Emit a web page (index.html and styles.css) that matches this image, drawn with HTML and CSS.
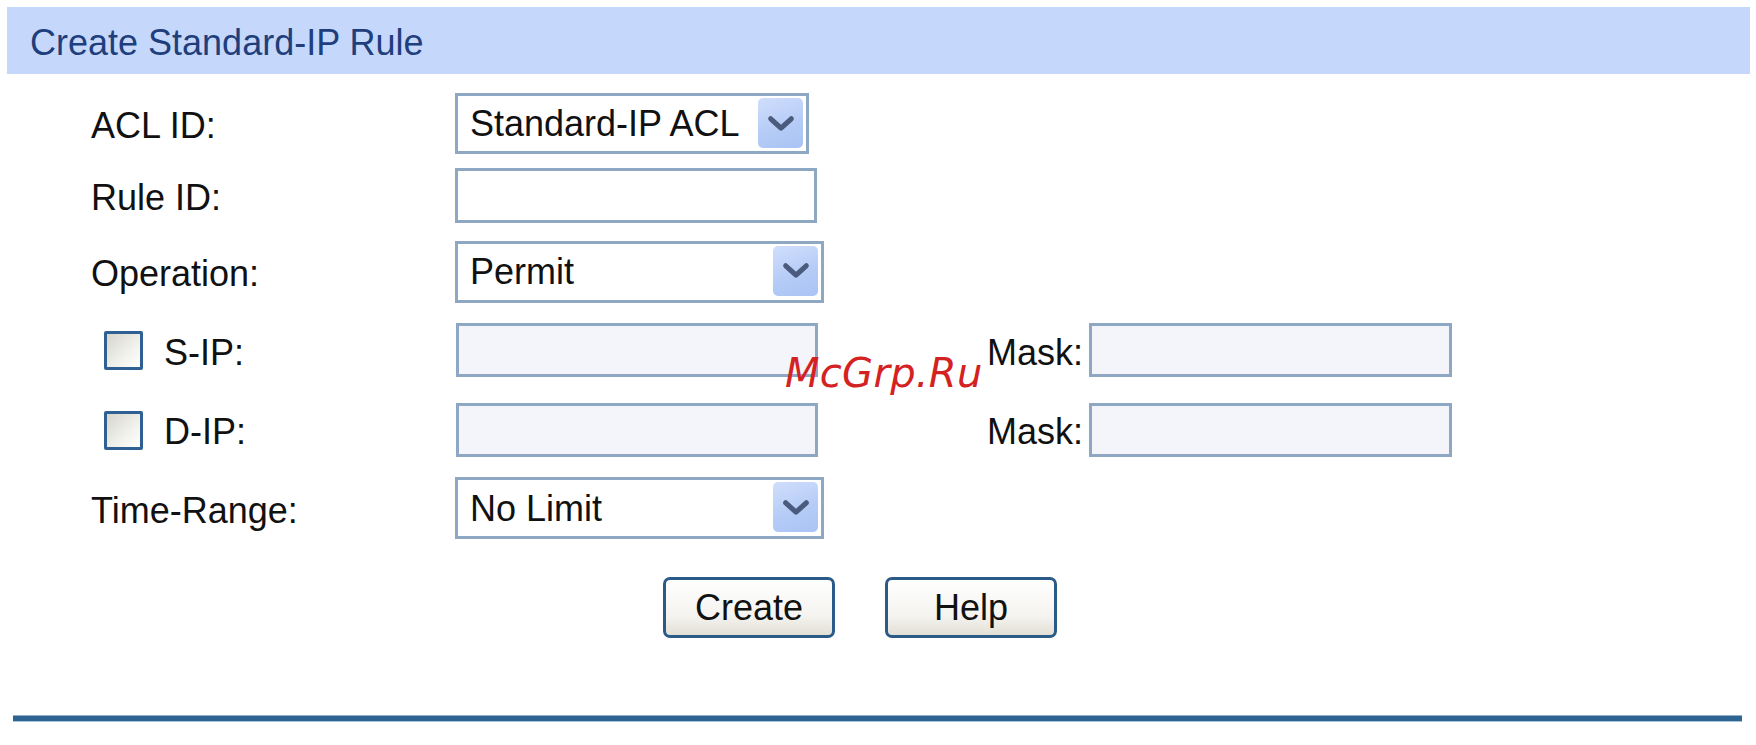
FILE: index.html
```html
<!DOCTYPE html>
<html lang="en">

<head>
    <meta charset="UTF-8">
    <meta name="viewport" content="width=device-width, initial-scale=1.0">
    <title>Create Standard-IP Rule</title>
    <link rel="stylesheet" href="styles.css">
</head>

<body>

    <div class="panel">
        <div class="title">Create Standard-IP Rule</div>

        <div class="form">
            <label class="lbl">ACL ID:</label>
            <span class="sel acl">
                <select><option>Standard-IP ACL</option></select>
                <i class="drop"><svg viewBox="0 0 30 18" width="28" height="17"><path d="M4 4 L15 14 L26 4" fill="none" stroke="#4a5b7d" stroke-width="5.5" stroke-linecap="round" stroke-linejoin="round"/></svg></i>
            </span>

            <label class="lbl">Rule ID:</label>
            <input type="text" class="txt rule-id">

            <label class="lbl">Operation:</label>
            <span class="sel wide">
                <select><option>Permit</option><option>Deny</option></select>
                <i class="drop"><svg viewBox="0 0 30 18" width="28" height="17"><path d="M4 4 L15 14 L26 4" fill="none" stroke="#4a5b7d" stroke-width="5.5" stroke-linecap="round" stroke-linejoin="round"/></svg></i>
            </span>

            <label class="lbl chk-lbl"><input type="checkbox" class="chk"><span>S-IP:</span></label>
            <input type="text" class="txt ip">
            <label class="mask">Mask:</label>
            <input type="text" class="txt ip mask-in">

            <label class="lbl chk-lbl"><input type="checkbox" class="chk"><span>D-IP:</span></label>
            <input type="text" class="txt ip">
            <label class="mask">Mask:</label>
            <input type="text" class="txt ip mask-in">

            <label class="lbl">Time-Range:</label>
            <span class="sel wide">
                <select><option>No Limit</option></select>
                <i class="drop"><svg viewBox="0 0 30 18" width="28" height="17"><path d="M4 4 L15 14 L26 4" fill="none" stroke="#4a5b7d" stroke-width="5.5" stroke-linecap="round" stroke-linejoin="round"/></svg></i>
            </span>
        </div>

        <div class="buttons">
            <button>Create</button>
            <button>Help</button>
        </div>

        <div class="bottom-line"></div>
    </div>

    <div class="watermark">McGrp.Ru</div>

</body>

</html>
```

FILE: styles.css
```css
body {
    margin: 0;
    background-color: #fff;
    font-family: "Liberation Sans", Arial, sans-serif;
    font-size: 36px;
    color: #111;
}

.panel {
    margin: 7px 6px 0 7px;
}

.title {
    height: 67px;
    box-sizing: border-box;
    padding: 4px 0 0 23px;
    line-height: 63px;
    background-color: #c5d8fb;
    color: #1f3e7c;
}

.form {
    display: grid;
    grid-template-columns: 364px 370px 264px 363px;
    grid-template-rows: 69px 75px 77px 80px 79px 78px;
    align-items: center;
    margin-top: 15px;
    padding-left: 84px;
}

.lbl {
    grid-column: 1;
    padding-top: 5px;
}

.chk-lbl {
    display: flex;
    align-items: center;
    padding-left: 13px;
}

.chk-lbl span {
    margin-left: 21px;
}

.chk {
    appearance: none;
    width: 39px;
    height: 39px;
    margin: -4px 0 0 0;
    box-sizing: border-box;
    border: 3px solid #2f5f93;
    border-radius: 2px;
    background: linear-gradient(135deg, #d6d6cc, #efefea 55%, #fff);
}

.sel {
    position: relative;
    grid-column: 2;
    display: block;
    height: 62px;
}

.sel.acl {
    width: 354px;
    height: 61px;
}

.sel.wide {
    width: 369px;
}

.sel select {
    appearance: none;
    width: 100%;
    height: 100%;
    box-sizing: border-box;
    margin: 0;
    border: 3px solid #8ea8c3;
    border-radius: 0;
    background-color: #fff;
    padding: 0 0 0 12px;
    font-family: inherit;
    font-size: 36px;
    color: #111;
}

.drop {
    position: absolute;
    top: 5px;
    right: 6px;
    width: 45px;
    height: 50px;
    border-radius: 5px;
    background: linear-gradient(160deg, #d0defc, #b4cbf6 60%, #a9c3f4);
    display: flex;
    align-items: center;
    justify-content: center;
}

.txt {
    grid-column: 2;
    box-sizing: border-box;
    margin: 0;
    border: 3px solid #8ea8c3;
    background-color: #fff;
    font-family: inherit;
    font-size: 36px;
}

.rule-id {
    width: 362px;
    height: 55px;
}

.ip {
    width: 362px;
    height: 54px;
    margin-left: 1px;
    background-color: #f3f5fa;
}

.mask {
    grid-column: 3;
    justify-self: end;
    padding: 5px 6px 0 0;
}

.mask-in {
    grid-column: 4;
    width: 363px;
    margin-left: 0;
}

.buttons {
    display: flex;
    justify-content: center;
    gap: 50px;
    margin-top: 30px;
    padding-right: 37px;
}

.buttons button {
    width: 172px;
    height: 61px;
    box-sizing: border-box;
    border: 3px solid #2c5a88;
    border-radius: 7px;
    background: linear-gradient(#ffffff, #f4f3ef 65%, #e2e0d6);
    font-family: inherit;
    font-size: 36px;
    color: #111;
    padding: 0;
}

.bottom-line {
    height: 5px;
    margin: 77px 8px 0 6px;
    background-color: #2d6491;
    border-top: 1px solid #8fb0cc;
    border-bottom: 1px solid #a9c3da;
}

.watermark {
    position: absolute;
    left: 785px;
    top: 350px;
    font-family: "DejaVu Sans", sans-serif;
    font-style: italic;
    font-size: 40px;
    color: #d42222;
    letter-spacing: 0.3px;
}
```
